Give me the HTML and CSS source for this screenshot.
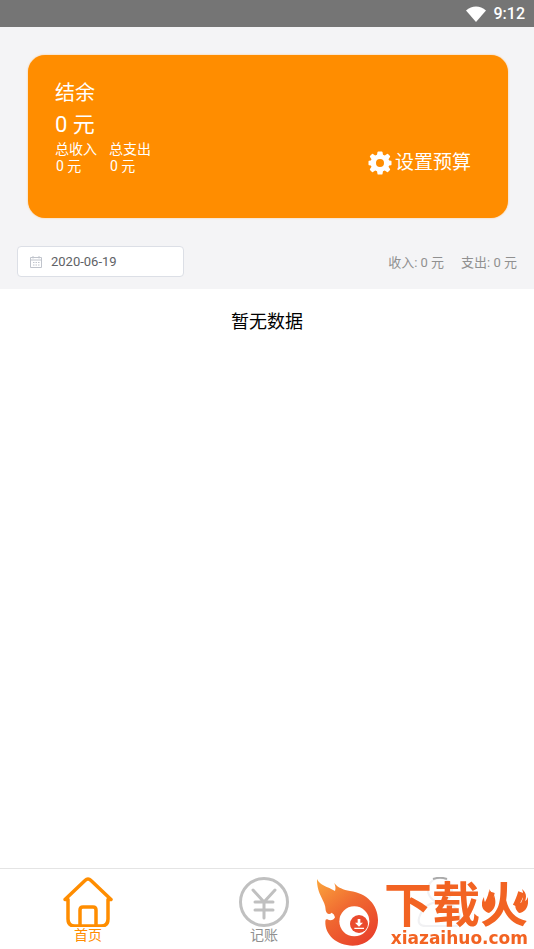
FILE: index.html
```html
<!DOCTYPE html>
<html lang="zh-CN">
<head>
    <meta charset="UTF-8">
    <meta name="viewport" content="width=device-width, initial-scale=1.0">
    <title>记账</title>
    <link rel="stylesheet" href="styles.css">
</head>
<body>

    <div class="status-bar">
        <svg class="wifi" viewBox="0 0 20 16" aria-hidden="true">
            <path d="M0 4.500C6-1 14-1 20 4.500L10 16Z" fill="#fff"/>
        </svg>
        <span>9:12</span>
    </div>

    <header class="top">
        <div class="card">
            <div class="balance">
                <h1>结余</h1>
                <p class="amount">0 元</p>
                <div class="totals">
                    <div>总收入<span>0 元</span></div>
                    <div>总支出<span>0 元</span></div>
                </div>
            </div>
            <button class="budget-btn" type="button">
                <svg viewBox="0 0 24 24" aria-hidden="true">
                    <path fill="#fff" fill-rule="evenodd" d="M9.500 1Q9.700 0.500 10.300 0.500H13.700Q14.300 0.500 14.500 1L15 3.700L16.800 4.500L19 2.900Q19.500 2.600 20 3L22 5Q22.300 5.500 22 6L20.500 8.200L21.200 9.500L23 9.800Q23.500 10 23.500 10.500V13.500Q23.500 14 23 14.200L21.200 14.500L20.500 15.800L22 18Q22.300 18.500 22 19L20 21Q19.500 21.400 19 21.100L16.800 19.500L15 20.300L14.500 23Q14.300 23.500 13.700 23.500H10.300Q9.700 23.500 9.500 23L9 20.300L7.200 19.500L5 21.100Q4.500 21.400 4 21L2 19Q1.700 18.500 2 18L3.500 15.800L2.800 14.500L1 14.200Q0.500 14 0.500 13.500V10.500Q0.500 10 1 9.800L2.800 9.500L3.500 8.200L2 6Q1.700 5.500 2 5L4 3Q4.500 2.600 5 2.900L7.200 4.500L9 3.700ZM12 8a4 4 0 1 0 0 8a4 4 0 1 0 0-8Z"/>
                </svg>
                设置预算
            </button>
        </div>

        <div class="filter">
            <label class="date-box">
                <svg viewBox="0 0 12 12" fill="none" stroke="#c0c4cc" aria-hidden="true">
                    <path d="M.5 1.500H11.500V11.500H.5ZM.5 4H11.500M3 0V2.500M9 0V2.500"/>
                    <path d="M3 6.500H9.500M3 9H9.500" stroke-dasharray="1.500 1"/>
                </svg>
                <input type="text" value="2020-06-19" aria-label="日期">
            </label>
            <div class="day-total">
                <span>收入: 0 元</span>
                <span>支出: 0 元</span>
            </div>
        </div>
    </header>

    <main class="list">
        <p>暂无数据</p>
    </main>

    <nav class="tabbar">
        <a class="tab active" href="#home">
            <svg viewBox="0 0 50 50" fill="none" stroke="currentColor" stroke-width="3.500" stroke-linecap="round" stroke-linejoin="round" aria-hidden="true">
                <path d="M5 22.500H2L22 3.500Q25 .5 28 3.500L48 22.500H45V42Q45 49 38 49H12Q5 49 5 42V22.500"/>
                <path d="M17 48V33Q17 30 20 30H30Q33 30 33 33V48"/>
            </svg>
            首页
        </a>
        <a class="tab" href="#add">
            <svg viewBox="0 0 50 50" fill="none" stroke="#c0c0c0" stroke-width="3" stroke-linecap="round" aria-hidden="true">
                <circle cx="25" cy="25" r="23.500"/>
                <path d="M14 13L25 25L36 13M16 25H34M16 33H34M25 25V41"/>
            </svg>
            记账
        </a>
        <a class="tab" href="#mine" aria-label="我的">
            <svg viewBox="0 0 50 50" fill="none" stroke="#f1f1f3" stroke-width="2" aria-hidden="true">
                <circle cx="25" cy="13" r="12"/>
                <path d="M11 49Q2 49 4 41Q9 25 25 25Q41 25 46 41Q48 49 39 49Z"/>
                <path d="M18 2Q25-.5 32 2" stroke="#aaa"/>
            </svg>
        </a>
    </nav>

    <div class="watermark">
        <svg class="flame" viewBox="18 24 186 204" aria-hidden="true">
            <defs>
                <linearGradient id="fire" x1="0" y1="0" x2=".7" y2="1">
                    <stop offset="0" stop-color="#fba63c"/>
                    <stop offset=".5" stop-color="#f06a31"/>
                    <stop offset="1" stop-color="#e9432b"/>
                </linearGradient>
            </defs>
            <path fill="url(#fire)" d="M21 27C30 47 52 49 75 63C78 55 76 48 73 39C84 54 100 59 120 63C170 69 204 105 204 150C204 195 172 227 128 227C82 227 44 196 46 154Q46 146 52 148C61 154 71 151 75 142Q73 131 65 128C59 135 49 133 47 121C48 92 20 75 21 27Z"/>
            <circle cx="133" cy="154" r="45" fill="#fff"/>
            <circle cx="147" cy="162" r="27" fill="#ea4a2d"/>
            <path fill="#fff" d="M143 147H151V158H159L147 170L135 158H143ZM133 173H162V177H133Z"/>
        </svg>
        <div class="brand">
            <div class="brand-name">下载火
                <svg class="sparks" viewBox="0 0 46 26" fill="#f26322" aria-hidden="true">
                    <path d="M7 25C-2 22-1 14 2 9Q2 14 4 15Q9 8 7 1Q12 6 9 13Q11 11 12 7C15 15 13 22 7 25Z"/>
                    <path d="M37 25C31 20 33 13 38 9Q36 14 39 15Q43 8 40 1Q46 6 43 13Q45 12 46 9C47 18 44 24 37 25Z"/>
                </svg>
            </div>
            <div class="brand-url">xiazaihuo.com</div>
        </div>
    </div>

</body>
</html>
```
FILE: styles.css
```css
* {
    box-sizing: border-box;
}

body {
    display: flex;
    flex-direction: column;
    min-height: 100vh;
    margin: 0;
    font-family: Roboto, "Noto Sans CJK SC", sans-serif;
    background-color: #fff;
    color: #000;
}

h1, p {
    margin: 0;
    font-weight: normal;
}

.status-bar {
    display: flex;
    justify-content: flex-end;
    align-items: center;
    gap: 8px;
    height: 27px;
    padding-right: 9px;
    background-color: #757575;
    color: #fff;
    font-size: 16px;
    font-weight: 500;
}

.wifi {
    width: 20px;
    height: 16px;
}

.top {
    padding: 28px 17px 12px;
    background-color: #f4f4f6;
}

.card {
    display: flex;
    justify-content: space-between;
    align-items: center;
    margin: 0 9px 28px 11px;
    padding: 22px 37px 43px 27px;
    border-radius: 17px;
    background-color: #ff8d00;
    box-shadow: 0 0 2px #ffc078;
    color: #fff;
}

.balance h1 {
    font-size: 20px;
    line-height: 32px;
}

.amount {
    font-size: 22px;
    line-height: 32px;
}

.totals {
    display: flex;
    gap: 12px;
    font-size: 14px;
    line-height: 17px;
}

.totals span {
    display: block;
    padding-left: 1px;
}

.budget-btn {
    display: flex;
    align-items: center;
    gap: 3px;
    margin-top: 73px;
    padding: 0;
    border: none;
    background: none;
    color: #fff;
    font-family: inherit;
    font-size: 19px;
    line-height: 24px;
    cursor: pointer;
}

.budget-btn svg {
    width: 24px;
    height: 24px;
}

.filter {
    display: flex;
    justify-content: space-between;
    align-items: center;
}

.date-box {
    display: flex;
    align-items: center;
    gap: 9px;
    width: 167px;
    height: 31px;
    padding: 0 12px;
    border: 1px solid #dcdfe6;
    border-radius: 4px;
    background-color: #fff;
}

.date-box svg {
    flex: none;
    width: 12px;
    height: 12px;
}

.date-box input {
    width: 100%;
    padding: 0;
    border: none;
    outline: none;
    background: none;
    color: #606266;
    font-family: inherit;
    font-size: 13px;
}

.day-total {
    display: flex;
    gap: 17px;
    color: #909090;
    font-size: 13px;
}

.list {
    flex: 1;
    padding-top: 21px;
    text-align: center;
    font-size: 18px;
    line-height: 24px;
}

.tabbar {
    display: flex;
    height: 81px;
    padding: 8px 6px 0 0;
    border-top: 1px solid #e4e4e4;
}

.tab {
    display: flex;
    flex: 1;
    flex-direction: column;
    align-items: center;
    color: #909090;
    font-size: 14px;
    line-height: 16px;
    text-decoration: none;
}

.tab svg {
    width: 50px;
    height: 50px;
}

.tab.active {
    color: #ff8d00;
}

.watermark {
    position: fixed;
    right: 6px;
    bottom: 3px;
    display: flex;
    align-items: flex-end;
    gap: 6px;
    color: #f26322;
}

.flame {
    width: 62px;
    height: 68px;
}

.brand-name {
    position: relative;
    padding-bottom: 8px;
    font-family: "Noto Sans CJK SC", sans-serif;
    font-size: 48px;
    font-weight: 700;
    line-height: 42px;
}

.sparks {
    position: absolute;
    top: 8px;
    right: 0;
    width: 46px;
    height: 26px;
}

.brand-url {
    font-family: "DejaVu Sans", sans-serif;
    font-size: 17px;
    font-weight: bold;
    line-height: 16px;
    text-align: right;
}
```
